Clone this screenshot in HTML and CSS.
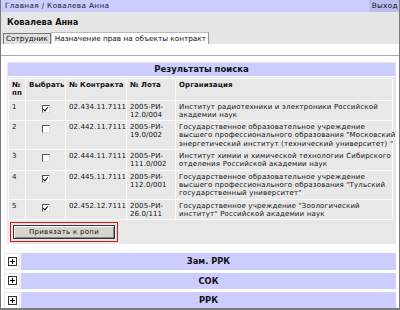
FILE: index.html
```html
<!DOCTYPE html>
<html>
<head>
<meta charset="utf-8">
<link rel="stylesheet" href="styles.css">
</head>
<body>
<div class="page">
  <div class="topbar">
    <span class="crumbs">Главная / Ковалева Анна</span>
    <span class="exit">Выход</span>
  </div>
  <div class="header">
    <div class="title">Ковалева Анна</div>
    <div class="tabs">
      <span class="tab">Сотрудник</span>
      <span class="tab active">Назначение прав на объекты контракт</span>
    </div>
  </div>
  <div class="content">
    <div class="sep"></div>
    <div class="panel">
      <div class="panel-head">Результаты поиска</div>
      <div class="panel-body">
        <table class="results">
          <colgroup>
            <col class="c1"><col class="c2"><col class="c3"><col class="c4"><col>
          </colgroup>
          <thead>
            <tr><th>№<br>пп</th><th>Выбрать</th><th>№ Контракта</th><th>№ Лота</th><th>Организация</th></tr>
          </thead>
          <tbody>
            <tr><td>1</td><td class="sel"><span class="cb checked"></span></td><td>02.434.11.7111</td><td>2005-РИ-<br>12.0/004</td><td class="org">Институт радиотехники и электроники Российской<br>академии наук</td></tr>
            <tr><td>2</td><td class="sel"><span class="cb"></span></td><td>02.442.11.7111</td><td>2005-РИ-<br>19.0/002</td><td class="org">Государственное образовательное учреждение<br>высшего профессионального образования "Московский<br>энергетический институт (технический университет) "</td></tr>
            <tr><td>3</td><td class="sel"><span class="cb"></span></td><td>02.444.11.7111</td><td>2005-РИ-<br>111.0/002</td><td class="org">Институт химии и химической технологии Сибирского<br>отделения Российской академии наук</td></tr>
            <tr><td>4</td><td class="sel"><span class="cb checked"></span></td><td>02.445.11.7111</td><td>2005-РИ-<br>112.0/001</td><td class="org">Государственное образовательное учреждение<br>высшего профессионального образования "Тульский<br>государственный университет"</td></tr>
            <tr><td>5</td><td class="sel"><span class="cb checked"></span></td><td>02.452.12.7111</td><td>2005-РИ-<br>26.0/111</td><td class="org">Государственное учреждение "Зоологический<br>институт" Российской академии наук</td></tr>
          </tbody>
        </table>
        <div class="actions">
          <div class="hl"><button class="btn">Привязать к ропи</button></div>
        </div>
      </div>
    </div>
    <div class="acc">
      <div class="acc-row"><span class="plus"><svg width="9" height="9" viewBox="0 0 9 9"><rect x="0.5" y="0.5" width="8" height="8" fill="#fff" stroke="#333"/><path d="M2 4.5H7M4.5 2V7" stroke="#000"/></svg></span><span class="acc-title">Зам. РРК</span></div>
      <div class="acc-row"><span class="plus"><svg width="9" height="9" viewBox="0 0 9 9"><rect x="0.5" y="0.5" width="8" height="8" fill="#fff" stroke="#333"/><path d="M2 4.5H7M4.5 2V7" stroke="#000"/></svg></span><span class="acc-title">СОК</span></div>
      <div class="acc-row"><span class="plus"><svg width="9" height="9" viewBox="0 0 9 9"><rect x="0.5" y="0.5" width="8" height="8" fill="#fff" stroke="#333"/><path d="M2 4.5H7M4.5 2V7" stroke="#000"/></svg></span><span class="acc-title">РРК</span></div>
    </div>
  </div>
</div>
</body>
</html>
```
FILE: styles.css
```css
html, body {
  margin: 0;
  padding: 0;
  background: #fff;
}
body {
  font-family: "DejaVu Sans", Verdana, sans-serif;
  font-size: 7px;
  color: #111;
}
.page {
  width: 400px;
  height: 310px;
  box-sizing: border-box;
  border: 1px solid #7a7a7a;
  border-top: 0;
  border-bottom-width: 2px;
  display: flex;
  flex-direction: column;
  overflow: hidden;
}
.topbar {
  flex: 0 0 12px;
  background: #ccccff;
  display: flex;
  justify-content: space-between;
  align-items: stretch;
  line-height: 12px;
  font-size: 7.3px;
  letter-spacing: 0.35px;
}
.crumbs {
  padding-left: 4px;
  color: #222;
}
.exit {
  background: #bdbdf2;
  padding: 0 1px 0 3px;
}
.header {
  background: #e6e6e6;
  flex: 0 0 32px;
  display: flex;
  flex-direction: column;
  justify-content: flex-end;
}
.title {
  font-weight: bold;
  font-size: 8.2px;
  line-height: 10px;
  padding-left: 6px;
  margin-bottom: 5px;
}
.tabs {
  display: flex;
  padding-left: 2px;
  height: 12px;
  align-items: flex-end;
}
.tab {
  height: 10px;
  line-height: 10px;
  border: 1px solid #777;
  border-bottom: 0;
  padding: 0 2px;
  background: #e0e0e0;
  font-size: 7.3px;
}
.tab.active {
  background: #fff;
  height: 11px;
  line-height: 11px;
  border-color: #bbb #999 #fff #ccc;
  padding: 0 2px 0 3px;
}
.content {
  flex: 1 1 auto;
  min-height: 0;
  display: flex;
  flex-direction: column;
  background: #fff;
}
.sep {
  flex: 0 0 1px;
  background: #aaa;
  margin-top: 11px;
}
.panel {
  flex: 0 0 auto;
  margin: 6px 3px 0 6px;
  border: 1px solid #e6e6f6;
  background: #fff;
}
.panel-head {
  background: #ccccff;
  height: 13px;
  line-height: 13px;
  text-align: center;
  font-weight: bold;
  font-size: 8.5px;
  border-bottom: 1px solid #fff;
}
.panel-body {
  background: #e8e8e8;
  padding: 1px 2px 0 0;
}
.results {
  width: 100%;
  table-layout: fixed;
  border-collapse: collapse;
  border: 1px solid #f4f4f4;
  background: #e8e8e8;
}
.c1 { width: 17px; }
.c2 { width: 40px; }
.c3 { width: 61px; }
.c4 { width: 49px; }
.results th, .results td {
  border: 1px solid #fafafa;
  text-align: left;
  vertical-align: top;
  padding: 2px 0 1px 3px;
  line-height: 8.3px;
  font-size: 7px;
  letter-spacing: 0.1px;
  white-space: nowrap;
}
.results td.org {
  letter-spacing: 0.18px;
}
.results th {
  font-weight: bold;
  letter-spacing: 0.1px;
  padding-top: 2px;
  padding-bottom: 2px;
}
.results td.sel {
  text-align: center;
  padding-left: 1px;
}
.cb {
  display: inline-block;
  width: 6px;
  height: 6px;
  margin-top: 2px;
  background: #fff;
  border-top: 1px solid #555;
  border-left: 1px solid #555;
  border-right: 1px solid #ddd;
  border-bottom: 1px solid #ddd;
  position: relative;
}
.cb.checked::after {
  content: "";
  position: absolute;
  left: 1px;
  top: 0px;
  width: 2px;
  height: 4px;
  border-right: 1.5px solid #111;
  border-bottom: 1.5px solid #111;
  transform: rotate(40deg);
}
.actions {
  padding: 2px 2px 1px 2px;
}
.hl {
  display: inline-block;
  vertical-align: top;
  border: 1px solid #e01010;
  padding: 2px;
  background: #e8e8e8;
}
.btn {
  display: block;
  width: 102px;
  height: 14px;
  padding: 0;
  font-family: "DejaVu Sans", Verdana, sans-serif;
  font-size: 7px;
  letter-spacing: 0.3px;
  color: #111;
  background: #d8d4cc;
  border: 1px solid #333;
  box-shadow: inset 1px 1px 0 #fff, inset -1px -1px 0 #888;
}
.acc {
  margin-top: 9px;
  display: flex;
  flex-direction: column;
  gap: 3px;
  padding: 0 3px 0 3px;
}
.acc-row {
  display: flex;
  gap: 1px;
  height: 16.5px;
}
.plus {
  width: 16px;
  background: #fff;
  border: 1px solid #e4e4f4;
  box-sizing: border-box;
  display: flex;
  align-items: center;
  justify-content: center;
}
.plus svg { display: block; }
.acc-title {
  flex: 1;
  background: #ccccff;
  text-align: center;
  font-weight: bold;
  font-size: 8.3px;
  line-height: 16.5px;
}
```
